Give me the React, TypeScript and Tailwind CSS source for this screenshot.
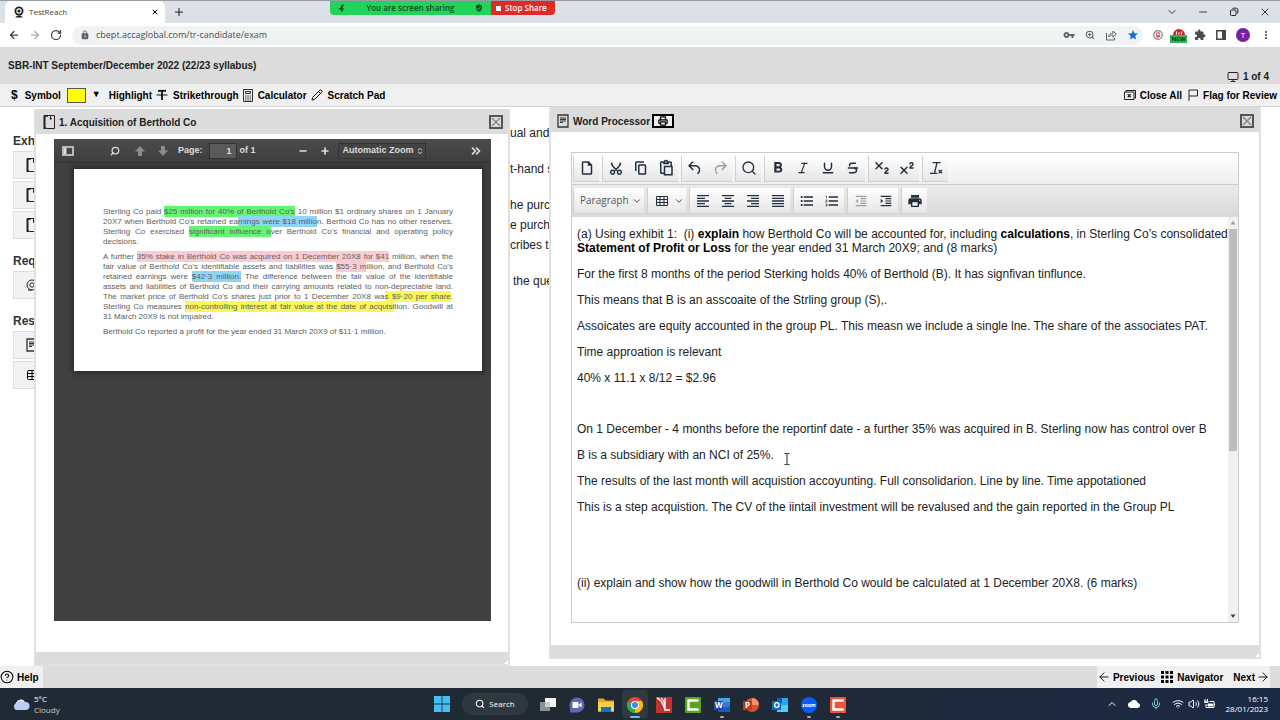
import type { ReactNode } from 'react';
import {
  ArrowLeft, ArrowRight, ChevronDown, ChevronUp, ChevronsRight, ChevronsUpDown, CircleHelp, Italic, Mic, Minus,
  Monitor, Pencil, Plus, Printer, RotateCw, Search, Strikethrough, Subscript, Superscript, Table, Underline,
  Volume2, Wifi, X, ZoomIn,
} from 'lucide-react';
import {
  MdCloud, MdExtension, MdFormatAlignCenter, MdFormatAlignJustify, MdFormatAlignLeft, MdFormatAlignRight,
  MdFormatBold, MdFormatIndentDecrease, MdFormatIndentIncrease, MdFormatListBulleted, MdFormatListNumbered,
  MdLock, MdMoreVert, MdPrint, MdStar, MdVerifiedUser, MdVpnKey,
} from 'react-icons/md';

const PageIcon = () => (
  <svg viewBox="0 0 12 14" className="w-3 h-3.5 shrink-0" fill="none" stroke="#222">
    <path d="M3.5 13.5h8v-13h-8" strokeWidth="1" />
    <path d="M1.5 .5v13h2M1 .8h4" strokeWidth="2" />
    <path d="M7.5 1v3.5l1.5-1.2" />
  </svg>
);

const NoteIcon = () => (
  <svg viewBox="0 0 12 14" className="w-3 h-3.5 shrink-0" fill="none" stroke="#333">
    <path d="M1 1h10v12H1z" strokeWidth="1.3" />
    <path d="M3 4h6M3 5.5h6M3 7h6M3 8.5h3" />
  </svg>
);

const CloseBox = ({ label }: { label: string }) => (
  <button aria-label={label} className="w-3.5 h-3.5 border-2 border-[#555] flex items-center justify-center">
    <svg viewBox="0 0 10 10" className="w-2.5 h-2.5" stroke="#888" strokeWidth="1.5"><path d="M1 1l8 8M9 1L1 9" /></svg>
  </button>
);

function BrowserChrome() {
  return (
    <div className="font-['Open_Sans',sans-serif] text-[#3c4043]">
      <div className="h-[23px] bg-[#dce1e8] flex items-center border-t border-[#9a9ca3] relative">
        <div className="ml-[5px] h-full w-[160px] bg-white rounded-t-md flex items-center pl-2 pr-1.5">
          <svg viewBox="0 0 12 12" className="w-3 h-3">
            <circle cx="6" cy="5" r="4.5" fill="#222" />
            <circle cx="6" cy="5" r="2.7" fill="#fff" />
            <circle cx="6" cy="5" r="1.6" fill="#222" />
            <path d="M2 11.5l2.500-2h3l2.500 2z" fill="#222" />
          </svg>
          <span className="ml-1 text-[8px]">TestReach</span>
          <button aria-label="Close tab" className="ml-auto"><X className="w-2 h-2 text-black" strokeWidth={3} /></button>
        </div>
        <button aria-label="New tab" className="ml-2"><Plus className="w-3 h-3" strokeWidth={2.5} /></button>
        <div className="ml-auto flex items-center gap-[19px] pr-[9px] text-black">
          <button aria-label="Search tabs"><ChevronDown className="w-3 h-3" strokeWidth={1.5} /></button>
          <button aria-label="Minimize"><Minus className="w-3 h-3" strokeWidth={1.5} /></button>
          <button aria-label="Restore" className="w-3 h-3 flex items-center justify-center">
            <svg viewBox="0 0 10 10" className="w-2.5 h-2.5" fill="none" stroke="#222"><rect x="1.500" y="3" width="5.500" height="5.500" rx="1" /><path d="M3.500 2c0-.5.5-.8 1-.8h3c.8 0 1.300.5 1.300 1.300v3c0 .5-.3 1-.8 1" /></svg>
          </button>
          <button aria-label="Close"><X className="w-3 h-3" strokeWidth={1.5} /></button>
        </div>

        {/* Screen share banner sits over the tab strip */}
        <div className="absolute top-0 left-[330px] h-[14px] flex rounded-b overflow-hidden text-[8px] font-semibold leading-none">
          <div className="w-[161px] bg-[#22d35a] text-[#0b4d1f] flex items-center justify-between px-2">
            <svg viewBox="0 0 8 8" className="w-2 h-2"><path d="M7 0C4 .3 2.500 2 2.500 4H.5L4 8l2-3.800H4.500C4.500 2.500 5.500 1 7 0z" fill="#0b4d1f" /></svg>
            <span>You are screen sharing</span>
            <MdVerifiedUser className="w-2 h-2" />
          </div>
          <button className="w-[64px] bg-[#e02828] text-white flex items-center gap-1 px-[5px] whitespace-nowrap">
            <span className="w-[5px] h-[5px] bg-white" />
            Stop Share
          </button>
        </div>
      </div>

      <div className="h-6 bg-white flex items-center px-2">
        <div className="flex items-center gap-[9px] w-16">
          <button aria-label="Back"><ArrowLeft className="w-3 h-3" strokeWidth={2.5} /></button>
          <button aria-label="Forward"><ArrowRight className="w-3 h-3 text-[#aaa]" strokeWidth={2.5} /></button>
          <button aria-label="Reload"><RotateCw className="w-3 h-3" strokeWidth={2.5} /></button>
        </div>
        <div className="flex-1 h-[19px] rounded-full bg-[#eff3f4] flex items-center gap-2.5 pl-2 pr-1 text-[#5f6368]">
          <MdLock className="w-2.5 h-2.5 -mr-1" />
          <input aria-label="Address" defaultValue="cbept.accaglobal.com/tr-candidate/exam" className="flex-1 min-w-0 bg-transparent text-[9px] text-[#4a4d50] outline-none" />
          <button aria-label="Passwords"><MdVpnKey className="w-3 h-3" /></button>
          <button aria-label="Zoom"><ZoomIn className="w-2.5 h-2.5" strokeWidth={2.5} /></button>
          <button aria-label="Share page">
            <svg viewBox="0 0 12 12" className="w-3 h-3" fill="none" stroke="currentColor"><path d="M1.500 4v7h8V9M3.500 8c.3-2.500 2-3.700 4.500-3.700V2l3.300 3.200L8 8.300V6.200C6 6.200 4.500 6.600 3.500 8z" /></svg>
          </button>
          <button aria-label="Bookmark"><MdStar className="w-3 h-3 text-[#1a6fd6]" /></button>
        </div>
        <div className="flex items-center gap-2.5 pl-2.5 text-[#4a4d50]">
          <button aria-label="Adblock">
            <svg viewBox="0 0 10 10" className="w-2.5 h-2.5"><circle cx="5" cy="5" r="4.300" fill="#eee" stroke="#888" strokeWidth="1.200" /><circle cx="5" cy="4.200" r="1.700" fill="none" stroke="#d0525a" /><path d="M3 6.500h4M5 5v3" stroke="#d0525a" /></svg>
          </button>
          <button aria-label="New extension" className="flex flex-col items-center -mx-[3px] mt-0.5">
            <svg viewBox="0 0 12 6" className="w-3 h-1.5"><path d="M0 6a6 6 0 0 1 12 0z" fill="#cc1f2c" /><path d="M3.500 2.500v3M8.500 2.500v3M6 3.500v2" stroke="#fff" strokeWidth="1.200" /></svg>
            <span className="w-[17px] bg-[#2fb45c] text-[6px] leading-[8px] font-bold text-[#07371a] text-center">NEW</span>
          </button>
          <button aria-label="Extensions"><MdExtension className="w-3 h-3" /></button>
          <button aria-label="Side panel">
            <svg viewBox="0 0 10 10" className="w-2.5 h-2.5"><path d="M.8.8h8.400v8.400H.8z" fill="none" stroke="#444" strokeWidth="1.500" /><path d="M6 1h3v8H6z" fill="#444" /></svg>
          </button>
          <button aria-label="Profile" className="w-3.5 h-3.5 rounded-full bg-[#7a1fa2] text-white text-[8px] leading-none">T</button>
          <button aria-label="Menu"><MdMoreVert className="w-3 h-3" /></button>
        </div>
      </div>
    </div>
  );
}

function ExamHeader() {
  return (
    <div className="text-[10px] font-bold text-black">
      <div className="h-[37px] bg-[#dcdcdc] flex items-center justify-between pl-2 pr-[11px]">
        <h1 className="text-[#222]">SBR-INT September/December 2022 (22/23 syllabus)</h1>
        <div className="self-end flex items-center gap-1 text-[#222]">
          <Monitor className="w-3 h-3" />
          <span>1 of 4</span>
        </div>
      </div>
      <div className="h-[23px] bg-[#f0f0f0] border-b border-[#d4d4d4] flex items-center justify-between pl-[11px] pr-[3px]">
        <div className="flex items-center gap-1">
          <button className="flex items-center gap-[7px]"><span className="text-xs">$</span>Symbol</button>
          <button aria-label="Highlight colour" className="w-[19px] h-[15px] mx-0.5 bg-[#ffff00] border border-[#555]" />
          <button className="flex items-center gap-2"><span className="text-[9px]">▼</span>Highlight</button>
          <button className="flex items-center gap-[5px]">
            <svg viewBox="0 0 12 12" className="w-3 h-3" fill="none" stroke="#111"><path d="M2 1.800h8" strokeWidth="1.800" /><path d="M6 2v9" strokeWidth="1.800" /><path d="M.5 6h11" /></svg>
            Strikethrough
          </button>
          <button className="flex items-center gap-[5px]">
            <svg viewBox="0 0 10 13" className="w-2.5 h-[13px]" fill="none" stroke="#333"><path d="M.5.5h9v12h-9zM2.500 2.500h5v2h-5z" /><path d="M2 7h1.500M4.300 7h1.500M6.600 7h1.500M2 9h1.500M4.300 9h1.500M6.600 9h1.500M2 11h1.500M4.300 11h1.500M6.600 11h1.500" /></svg>
            Calculator
          </button>
          <button className="flex items-center gap-[5px]"><Pencil className="w-3 h-3" />Scratch Pad</button>
        </div>
        <div className="flex items-center gap-1.5">
          <button className="flex items-center gap-1">
            <svg viewBox="0 0 12 10" className="w-3 h-2.5" fill="none" stroke="#222"><path d="M2 2V.5h9.500v7.500H10M.5 2H10v7.500H.5z" /><path d="M3.700 4.200l3 3M6.700 4.200l-3 3" strokeWidth="1.300" /></svg>
            Close All
          </button>
          <button className="flex items-center gap-[5px]">
            <svg viewBox="0 0 10 12" className="w-2.5 h-3" fill="none" stroke="#222"><path d="M1 12V1h8.500v6H1" /></svg>
            Flag for Review
          </button>
        </div>
      </div>
    </div>
  );
}

const navGroups = [
  { title: 'Exh', icons: ['page', 'page', 'page'] },
  { title: 'Req', icons: ['at'] },
  { title: 'Res', icons: ['note', 'grid'] },
];

function NavIcon({ kind }: { kind: string }) {
  if (kind === 'page') return <PageIcon />;
  if (kind === 'note') return <NoteIcon />;
  if (kind === 'grid') return <Table className="w-3 h-3 shrink-0" />;
  return (
    <svg viewBox="0 0 12 12" className="w-3 h-3 shrink-0" fill="none" stroke="#222"><circle cx="6" cy="6" r="5" /><circle cx="6" cy="6" r="2.200" /><path d="M2 11h4" /></svg>
  );
}

function PdfLine({ children, last }: { children: ReactNode; last?: boolean }) {
  return <span className={last ? 'block' : 'block [text-align-last:justify]'}>{children}</span>;
}

const Green = ({ children }: { children: ReactNode }) => <mark className="bg-[#64f573] text-inherit py-px">{children}</mark>;
const Blue = ({ children }: { children: ReactNode }) => <mark className="bg-[#8ed4f7] text-inherit py-px">{children}</mark>;
const Pink = ({ children }: { children: ReactNode }) => <mark className="bg-[#f9ccd3] text-inherit py-px">{children}</mark>;
const Yellow = ({ children }: { children: ReactNode }) => <mark className="bg-[#fbf75a] text-inherit py-px">{children}</mark>;

function PdfViewer() {
  return (
    <div className="flex-1 bg-[#404040] flex flex-col">
      <div className="h-6 bg-linear-to-b from-[#4c4c4c] to-[#3e3e3e] border-b border-[#333] flex items-center px-2 text-[9px] font-bold text-[#ddd]">
        <button aria-label="Toggle sidebar">
          <svg viewBox="0 0 12 10" className="w-3 h-2.5"><path d="M1 1h10v8H1z" fill="none" stroke="#ddd" strokeWidth="1.500" /><path d="M2 2h2.500v6H2z" fill="#ddd" /></svg>
        </button>
        <button aria-label="Find" className="ml-9"><Search className="w-2.5 h-2.5 -scale-x-100" strokeWidth={3} /></button>
        <button aria-label="Previous page" className="ml-[15px] text-[#8c8c8c]">
          <svg viewBox="0 0 10 10" className="w-2.5 h-2.5" fill="currentColor"><path d="M5 0l5 5.500H7V10H3V5.500H0z" /></svg>
        </button>
        <button aria-label="Next page" className="ml-[13px] text-[#8c8c8c]">
          <svg viewBox="0 0 10 10" className="w-2.5 h-2.5" fill="currentColor"><path d="M5 10L0 4.500h3V0h4v4.500h3z" /></svg>
        </button>
        <label htmlFor="pdf-page" className="ml-2.5">Page:</label>
        <input id="pdf-page" defaultValue="1" className="ml-1.5 w-7 h-4 bg-[#5a5a5a] border border-[#333] text-right pr-1 outline-none" />
        <span className="ml-[3px]">of 1</span>
        <button aria-label="Zoom out" className="ml-[42px]"><Minus className="w-2.5 h-2.5" strokeWidth={4} /></button>
        <button aria-label="Zoom in" className="ml-3"><Plus className="w-2.5 h-2.5" strokeWidth={4} /></button>
        <div className="ml-2 relative flex items-center">
          <select aria-label="Zoom level" className="w-[88px] h-4 appearance-none bg-[#444] border border-[#333] pl-1 text-[9px] outline-none">
            <option>Automatic Zoom</option>
          </select>
          <ChevronsUpDown className="absolute right-0.5 w-2 h-2 pointer-events-none" strokeWidth={3} />
        </div>
        <button aria-label="Tools" className="ml-auto"><ChevronsRight className="w-3.5 h-3.5" strokeWidth={3} /></button>
      </div>
      <div className="mr-[9px] ml-5 mt-1.5 bg-white shadow-[0_0_5px_2px_#2a2a2a] px-[29px] pt-[38px] pb-[34px] text-[8px] leading-[10px] text-[#606060] flex flex-col gap-[5px]">
        <p>
          <PdfLine>Sterling Co paid <Green>$25 million for 40% of Berthold Co's</Green> 10 million $1 ordinary shares on 1 January</PdfLine>
          <PdfLine>20X7 when Berthold Co's retained ea<Blue>rnings were $18 millio</Blue>n. Berthold Co has no other reserves.</PdfLine>
          <PdfLine>Sterling Co exercised <Green>significant influence o</Green>ver Berthold Co's financial and operating policy</PdfLine>
          <PdfLine last>decisions.</PdfLine>
        </p>
        <p>
          <PdfLine>A further <Pink>35% stake in Berthold Co was acquired on 1 December 20X8 for $41</Pink> million, when the</PdfLine>
          <PdfLine>fair value of Berthold Co's identifiable assets and liabilities was <Pink>$55·3 m</Pink>illion, and Berthold Co's</PdfLine>
          <PdfLine>retained earnings were <Blue>$42·3 million.</Blue> The difference between the fair value of the identifiable</PdfLine>
          <PdfLine>assets and liabilities of Berthold Co and their carrying amounts related to non-depreciable land.</PdfLine>
          <PdfLine>The market price of Berthold Co's shares just prior to 1 December 20X8 wa<Yellow>s $9·20 per share</Yellow>.</PdfLine>
          <PdfLine>Sterling Co measures <Yellow>non-controlling interest at fair value at the date of acquisi</Yellow>tion. Goodwill at</PdfLine>
          <PdfLine last>31 March 20X9 is not impaired.</PdfLine>
        </p>
        <p>Berthold Co reported a profit for the year ended 31 March 20X9 of $11·1 million.</p>
      </div>
    </div>
  );
}

function ToolGroup({ children }: { children: ReactNode }) {
  return <div className="h-[26px] flex items-center bg-linear-to-b from-white to-[#e6e6e6] border-l border-b border-[#d0d0d0]">{children}</div>;
}

function Tool({ label, children, dim }: { label: string; children: ReactNode; dim?: boolean }) {
  return (
    <button aria-label={label} title={label} className={`w-[25px] h-6 flex items-center justify-center ${dim ? 'text-[#9a9fa8]' : 'text-[#222f3e]'}`}>
      {children}
    </button>
  );
}

const Glyph = ({ d, flip }: { d: string; flip?: boolean }) => (
  <svg viewBox="0 0 24 24" className={flip ? 'w-[18px] h-[18px] -scale-x-100' : 'w-[18px] h-[18px]'} fill="currentColor" fillRule="evenodd"><path d={d} /></svg>
);

const glyphs = {
  file: 'M14.4 3H7a2 2 0 0 0-2 2v14c0 1.1.9 2 2 2h10a2 2 0 0 0 2-2V7.600L14.400 3zM17 19H7V5h6v4h4v10z',
  copy: 'M16 3H6a2 2 0 0 0-2 2v11h2V5h10V3zm1 4a2 2 0 0 1 2 2v10a2 2 0 0 1-2 2h-7a2 2 0 0 1-2-2V9c0-1.200.9-2 2-2h7zm0 12V9h-7v10h7z',
  paste: 'M18 9V5h-2v1c0 .6-.4 1-1 1H9a1 1 0 0 1-1-1V5H6v13h3v2H6a2 2 0 0 1-2-2V5c0-1.100.9-2 2-2h3.200a3 3 0 0 1 5.600 0H18a2 2 0 0 1 2 2v4h1v13H9V9h9zM12 3a1 1 0 1 0 0 2 1 1 0 0 0 0-2zm7 17v-9h-8v9h8z',
  undo: 'M6.400 8H12c3.700 0 6.200 2 6.800 5.100.6 2.700-.4 5.600-2.300 6.800a1 1 0 0 1-1-1.800c1.100-.6 1.800-2.700 1.400-4.600-.5-2.100-2.100-3.500-4.900-3.500H6.400l3.300 3.300a1 1 0 1 1-1.400 1.400l-5-5a1 1 0 0 1 0-1.400l5-5a1 1 0 0 1 1.400 1.400L6.400 8z',
};

function EditorToolbar() {
  return (
    <div className="text-[#222f3e]">
      <div className="h-8 bg-linear-to-b from-white to-[#efefef] border-b border-[#ccc] flex items-center gap-[3px] pl-px">
        <ToolGroup><Tool label="New document"><Glyph d={glyphs.file} /></Tool></ToolGroup>
        <ToolGroup>
          <Tool label="Cut">
            <svg viewBox="0 0 24 24" className="w-[18px] h-[18px]" fill="none" stroke="currentColor" strokeWidth="1.800"><path d="M6 5c0 3 1 4 3 6l5.500 5M18 5c0 3-1 4-3 6l-5.500 5" strokeWidth="2.200" /><circle cx="7.500" cy="17.500" r="2.500" /><circle cx="16.500" cy="17.500" r="2.500" /></svg>
          </Tool>
          <Tool label="Copy"><Glyph d={glyphs.copy} /></Tool>
          <Tool label="Paste"><Glyph d={glyphs.paste} /></Tool>
        </ToolGroup>
        <ToolGroup>
          <Tool label="Undo"><Glyph d={glyphs.undo} /></Tool>
          <Tool label="Redo" dim><Glyph d={glyphs.undo} flip /></Tool>
        </ToolGroup>
        <ToolGroup><Tool label="Find and replace"><Search className="w-4 h-4" /></Tool></ToolGroup>
        <ToolGroup>
          <Tool label="Bold"><MdFormatBold className="w-[18px] h-[18px]" /></Tool>
          <Tool label="Italic"><Italic className="w-3.5 h-3.5" /></Tool>
          <Tool label="Underline"><Underline className="w-3.5 h-3.5" strokeWidth={2.5} /></Tool>
          <Tool label="Strikethrough"><Strikethrough className="w-3.5 h-3.5" strokeWidth={2.5} /></Tool>
        </ToolGroup>
        <ToolGroup>
          <Tool label="Subscript"><Subscript className="w-[18px] h-[18px]" /></Tool>
          <Tool label="Superscript"><Superscript className="w-[18px] h-[18px]" /></Tool>
        </ToolGroup>
        <ToolGroup>
          <Tool label="Clear formatting">
            <svg viewBox="0 0 24 24" className="w-4 h-4" fill="none" stroke="currentColor" strokeWidth="2"><path d="M7 4h12M13.500 4L10 19M3 20h11M16 15l5 5M21 15l-5 5" /></svg>
          </Tool>
        </ToolGroup>
      </div>
      <div className="h-8 bg-linear-to-b from-[#ebebeb] to-[#d9d9d9] flex items-center gap-[3px] pl-px">
        <ToolGroup>
          <div className="relative flex items-center">
            <select aria-label="Block format" className="w-[70px] h-6 appearance-none bg-transparent pl-1.5 text-[10px] font-['Open_Sans',sans-serif] text-[#555] outline-none">
              <option>Paragraph</option>
            </select>
            <ChevronDown className="absolute right-0.5 w-2.5 h-2.5 pointer-events-none" />
          </div>
        </ToolGroup>
        <ToolGroup>
          <button aria-label="Table" className="w-[38px] h-6 flex items-center justify-between pl-2 pr-0.5">
            <svg viewBox="0 0 12 10" className="w-3 h-2.5" fill="none" stroke="currentColor"><path d="M.5.5h11v9H.5zM.5 3.500h11M.5 6.500h11M4 .5v9M8 .5v9" /></svg>
            <ChevronDown className="w-2.5 h-2.5" />
          </button>
        </ToolGroup>
        <ToolGroup>
          <Tool label="Align left"><MdFormatAlignLeft className="w-4 h-4" /></Tool>
          <Tool label="Align center"><MdFormatAlignCenter className="w-4 h-4" /></Tool>
          <Tool label="Align right"><MdFormatAlignRight className="w-4 h-4" /></Tool>
          <Tool label="Justify"><MdFormatAlignJustify className="w-4 h-4" /></Tool>
        </ToolGroup>
        <ToolGroup>
          <Tool label="Bullet list"><MdFormatListBulleted className="w-4 h-4" /></Tool>
          <Tool label="Numbered list"><MdFormatListNumbered className="w-4 h-4" /></Tool>
        </ToolGroup>
        <ToolGroup>
          <Tool label="Decrease indent" dim><MdFormatIndentDecrease className="w-3.5 h-3.5" /></Tool>
          <Tool label="Increase indent"><MdFormatIndentIncrease className="w-3.5 h-3.5" /></Tool>
        </ToolGroup>
        <ToolGroup><Tool label="Print"><MdPrint className="w-4 h-4" /></Tool></ToolGroup>
      </div>
    </div>
  );
}

function ExhibitWindow() {
  return (
    <section className="absolute left-[34px] top-0.5 bottom-0 w-[476px] bg-white border-2 border-t-0 border-[#e0e0e0] flex flex-col">
      <header className="h-[25px] bg-[#dcdcdc] flex items-center gap-1 pl-[7px] pr-[5px] pt-px">
        <PageIcon />
        <h2 className="text-[10px] font-bold text-[#222] mr-auto">1. Acquisition of Berthold Co</h2>
        <CloseBox label="Close exhibit" />
      </header>
      <div className="flex-1 flex flex-col pl-[18px] pr-[17px] pt-[5px] pb-[31px]">
        <PdfViewer />
      </div>
      <div className="h-3 bg-[#dcdcdc] flex items-end justify-end">
        <svg viewBox="0 0 4 4" className="w-1 h-1" fill="#fff"><path d="M4 0v4H0z" /></svg>
      </div>
    </section>
  );
}

function WordWindow() {
  return (
    <section className="absolute left-[549px] right-[19px] top-0 bottom-[7px] bg-white border-2 border-t-0 border-[#e0e0e0] flex flex-col">
      <header className="h-[25px] bg-[#dcdcdc] flex items-center gap-1 pl-1.5 pr-[5px] pt-[3px]">
        <NoteIcon />
        <h2 className="text-[10px] font-bold text-[#222]">Word Processor</h2>
        <button aria-label="Print document" className="w-[22px] h-3.5 -ml-0.5 border-2 border-black bg-[#eee] flex items-center justify-center">
          <Printer className="w-2.5 h-2.5 text-black" strokeWidth={3} />
        </button>
        <div className="ml-auto"><CloseBox label="Close word processor" /></div>
      </header>
      <div className="flex-1 flex flex-col px-5 pt-5 pb-[22px]">
        <div className="flex-1 border border-[#ccc] flex flex-col">
          <EditorToolbar />
          <div className="flex-1 flex">
            <div role="textbox" aria-label="Answer" contentEditable suppressContentEditableWarning className="flex-1 min-w-0 pl-[5px] pt-2.5 flex flex-col gap-3 text-xs leading-[14px] text-[#222] outline-none whitespace-pre">
              <p>
                (a) Using exhibit 1:  (i) <b className="text-black">explain</b> how Berthold Co will be accounted for, including <b className="text-black">calculations</b>, in Sterling Co’s consolidated<br />
                <b className="text-black">Statement of Profit or Loss</b> for the year ended 31 March 20X9; and (8 marks)
              </p>
              <p>For the first 8 months of the period Sterking holds 40% of Berthold (B). It has signfivan tinflunce.</p>
              <p>This means that B is an asscoaite of the Strling group (S),.</p>
              <p>Assoicates are equity accounted in the group PL. This measn we include a single lne. The share of the associates PAT.</p>
              <p>Time approation is relevant</p>
              <p>40% x 11.1 x 8/12 = $2.96</p>
              <p className="h-[13px]" />
              <p>On 1 December - 4 months before the reportinf date - a further 35% was acquired in B. Sterling now has control over B</p>
              <p>B is a subsidiary with an NCI of 25%.</p>
              <p>The results of the last month will acquistion accoyunting. Full consolidarion. Line by line. Time appotationed</p>
              <p>This is a step acquistion. The CV of the iintail investment will be revalused and the gain reported in the Group PL</p>
              <p className="h-[13px]" />
              <p className="h-[13px]" />
              <p>(ii) explain and show how the goodwill in Berthold Co would be calculated at 1 December 20X8. (6 marks)</p>
            </div>
            <div className="w-2.5 shrink-0 bg-[#f1f1f1] flex flex-col items-center py-1">
              <svg viewBox="0 0 6 4" className="w-1.5 h-1" fill="#999"><path d="M3 0l2.500 3.500h-5z" /></svg>
              <div className="w-2 h-[222px] bg-[#bdbdbd] mt-1 mb-auto" />
              <svg viewBox="0 0 6 4" className="w-1.5 h-1" fill="#444"><path d="M3 4L.5.5h5z" /></svg>
            </div>
          </div>
        </div>
      </div>
      <div className="h-3 bg-[#dcdcdc] flex items-end justify-end">
        <svg viewBox="0 0 4 4" className="w-1 h-1" fill="#fff"><path d="M4 0v4H0z" /></svg>
      </div>
      {/* Text cursor */}
      <svg viewBox="0 0 6 12" className="absolute left-[233px] top-[346px] w-1.5 h-3" fill="none" stroke="#222"><path d="M.5.5h2l.5.5.5-.5h2M3 1v10M.5 11.500h2l.5-.5.5.5h2" /></svg>
    </section>
  );
}

function Workspace() {
  return (
    <main className="flex-1 relative bg-white overflow-hidden">
      <nav aria-label="Exam contents" className="w-[34px] pl-[13px] pt-[26px] flex flex-col gap-3.5 overflow-hidden">
        {navGroups.map((group) => (
          <div key={group.title} className="flex flex-col gap-0.5">
            <h3 className="text-xs leading-4 font-bold text-[#333]">{group.title}</h3>
            {group.icons.map((kind, i) => (
              <button key={i} aria-label={`${group.title} ${i + 1}`} className="h-7 bg-[#f2f2f2] border border-r-0 border-[#ddd] flex items-center pl-3 overflow-hidden">
                <NavIcon kind={kind} />
              </button>
            ))}
          </div>
        ))}
      </nav>
      <div className="absolute left-[510px] top-4 w-[39px] overflow-hidden whitespace-nowrap text-xs leading-5 text-[#222]">
        <p>ual and</p>
        <p className="mt-4">t-hand s</p>
        <p className="mt-4">he purch</p>
        <p>e purch</p>
        <p>cribes th</p>
        <p className="mt-4 pl-[3px]">the que</p>
      </div>
      <ExhibitWindow />
      <WordWindow />
    </main>
  );
}

function ExamFooter() {
  return (
    <footer className="h-[22px] bg-[#dcdcdc] flex justify-between pr-2.5 text-[10px] font-bold text-black">
      <button className="bg-[#f0f0f0] flex items-center gap-[3px] w-[43px]"><CircleHelp className="w-3.5 h-3.5 shrink-0" strokeWidth={1.8} />Help</button>
      <div className="bg-[#f0f0f0] flex items-center gap-1.5">
        <button className="flex items-center gap-0.5"><ArrowLeft className="w-3.5 h-3.5" strokeWidth={1.5} />Previous</button>
        <button className="flex items-center gap-1">
          <svg viewBox="0 0 12 12" className="w-3 h-3"><path d="M0 0h3v3H0zM4.500 0h3v3h-3zM9 0h3v3H9zM0 4.500h3v3H0zM4.500 4.500h3v3h-3zM9 4.500h3v3H9zM0 9h3v3H0zM4.500 9h3v3h-3zM9 9h3v3H9z" /></svg>
          Navigator
        </button>
        <button className="flex items-center gap-px ml-1"><span>Next</span><ArrowRight className="w-3.5 h-3.5" strokeWidth={1.5} /></button>
      </div>
    </footer>
  );
}

const letter = 'fill-white font-bold text-[8px]';

const taskbarApps: { name: string; running?: boolean; active?: boolean; art: ReactNode }[] = [
  { name: 'Task view', art: <><path d="M5 1h11v9H5z" fill="#f2f4f5" /><path d="M0 5h10v9H0z" fill="#8b9093" /><path d="M5 5h5v5H5z" fill="#c8cccd" /></> },
  { name: 'Chat', art: <><circle cx="8" cy="8" r="7.500" fill="#6366b5" /><path d="M1 10v5.500h7z" fill="#6366b5" /><rect x="3.500" y="5" width="6" height="6" rx="1" fill="#fff" /><path d="M10 7.500L12.500 5.500v5L10 8.500z" fill="#fff" /></> },
  { name: 'File Explorer', art: <><path d="M0 1.500h5.500l2 2H16v11H0z" fill="#e9a820" /><path d="M0 5h16v9.500H0z" fill="#fbcf4b" /><path d="M3 10h10v5H3z" fill="#1871bd" /></> },
  { name: 'Chrome', running: true, active: true, art: <><circle cx="8" cy="8" r="8" fill="#e94335" /><path d="M8 8L1.070 4A8 8 0 0 0 8 16l3.500-6z" fill="#33a852" /><path d="M8 16a8 8 0 0 0 6.930-12H8z" fill="#fbbc05" /><circle cx="8" cy="8" r="4" fill="#fff" /><circle cx="8" cy="8" r="3" fill="#4285f4" /></> },
  { name: 'PDF reader', art: <><path d="M0 0h16v16H0z" fill="#c2322f" /><path d="M1 1c4 1 6 5 8 12M5 1c2 1 3.500 5 4 9M9 1v12h5" fill="none" stroke="#fff" strokeWidth="1.300" /></> },
  { name: 'Camtasia', art: <><rect width="16" height="16" rx="1" fill="#58a618" /><path d="M12.500 4.500v-1h-9v9h9v-1" fill="none" stroke="#fff" strokeWidth="2.400" /></> },
  { name: 'Word', running: true, art: <><path d="M4 1h12v14H4z" fill="#2b7cd3" /><path d="M4 1h12v4H4z" fill="#41a5ee" /><path d="M4 10h12v5H4z" fill="#185abd" /><path d="M0 4h9v9H0z" fill="#1450a8" /><text x="1" y="11" className={letter}>W</text></> },
  { name: 'PowerPoint', art: <><circle cx="9" cy="8" r="7" fill="#d35230" /><path d="M9 1a7 7 0 0 1 7 7H9z" fill="#ff8f6b" /><path d="M0 4h9v9H0z" fill="#c13b1b" /><text x="2" y="11" className={letter}>P</text></> },
  { name: 'Outlook', art: <><path d="M5 1h11v13H5z" fill="#28a8ea" /><path d="M5 1h5v5H5z" fill="#0a64b4" /><path d="M5 9l11-1v7H5z" fill="#50d0f5" /><path d="M0 4h9v9H0z" fill="#0f6cbd" /><text x="1.500" y="11" className={letter}>O</text></> },
  { name: 'Zoom', running: true, art: <><circle cx="8" cy="8" r="8" fill="#0b5cff" /><text x="8" y="9.500" textAnchor="middle" className="fill-white font-bold text-[5px]">zoom</text></> },
  { name: 'Camtasia Recorder', running: true, art: <><rect width="16" height="16" rx="1" fill="#f0523d" /><path d="M12.500 4.500v-1h-9v9h9v-1" fill="none" stroke="#fff" strokeWidth="2.400" /></> },
];

function Taskbar() {
  return (
    <footer className="h-8 bg-linear-to-r from-[#202a36] via-[#212a33] to-[#1b2944] grid grid-cols-[1fr_auto_1fr] items-center text-white font-['Open_Sans',sans-serif]">
      <button className="flex items-center gap-1 pl-3 text-left text-[8px] leading-[11px]">
        <svg viewBox="0 0 18 12" className="w-[18px] h-3"><path d="M4 12a4 4 0 0 1 0-7 5 5 0 0 1 9-1 4 4 0 0 1 1 8z" fill="#b9cdf5" /><path d="M5 5a4 4 0 0 1 7-1" stroke="#e4ecff" strokeWidth="1.500" fill="none" /></svg>
        <span>5°C<br /><span className="text-[#ccc]">Cloudy</span></span>
      </button>
      <div className="flex items-center gap-[3px]">
        <button aria-label="Start" className="w-[26px] flex justify-center">
          <svg viewBox="0 0 16 16" className="w-4 h-4" fill="#43bdf5"><path d="M0 0h7.600v7.600H0zM8.400 0H16v7.600H8.400zM0 8.400h7.600V16H0zM8.400 8.400H16V16H8.400z" /></svg>
        </button>
        <button className="w-[66px] h-[22px] mx-1 rounded-full bg-[#2f383f] flex items-center justify-center gap-1 text-[8px]">
          <Search className="w-2.5 h-2.5" strokeWidth={2.5} />Search
        </button>
        {taskbarApps.map((app) => (
          <button key={app.name} aria-label={app.name} className={`w-[26px] h-7 flex flex-col items-center justify-end gap-[3px] rounded-sm ${app.active ? 'bg-[#303941]' : ''}`}>
            <svg viewBox="0 0 16 16" className="w-4 h-4">{app.art}</svg>
            <span className={`h-0.5 rounded-full ${app.active ? 'w-2.5 bg-[#5fc3f0]' : app.running ? 'w-1 bg-[#a8adb0]' : 'w-1'}`} />
          </button>
        ))}
      </div>
      <div className="flex items-center justify-end pr-3">
        <button aria-label="Hidden icons"><ChevronUp className="w-3 h-3" /></button>
        <button aria-label="OneDrive" className="ml-2.5"><MdCloud className="w-3 h-3" /></button>
        <button aria-label="Microphone" className="ml-2.5"><Mic className="w-3 h-3 text-[#7fc3d0]" /></button>
        <button aria-label="Network, volume and battery" className="ml-2.5 flex items-center gap-1">
          <Wifi className="w-3 h-3" />
          <Volume2 className="w-3 h-3" />
          <svg viewBox="0 0 12 10" className="w-3 h-2.5" fill="none" stroke="#fff"><path d="M2 5v3.500h8V2.500H5.500M10.500 4.500v2" /><path d="M1 0v2M3.500 0v2M.5 2.200h3.500v1.300H.5z" /><path d="M4 5h4.500v2H4z" fill="#fff" /></svg>
        </button>
        <button className="ml-2.5 text-right text-[8px] leading-[10px]">16:15<br />28/01/2023</button>
      </div>
    </footer>
  );
}

export default function App() {
  return (
    <div className="h-screen flex flex-col overflow-hidden bg-white font-['Liberation_Sans',Arial,sans-serif]">
      <BrowserChrome />
      <ExamHeader />
      <Workspace />
      <ExamFooter />
      <Taskbar />
    </div>
  );
}
